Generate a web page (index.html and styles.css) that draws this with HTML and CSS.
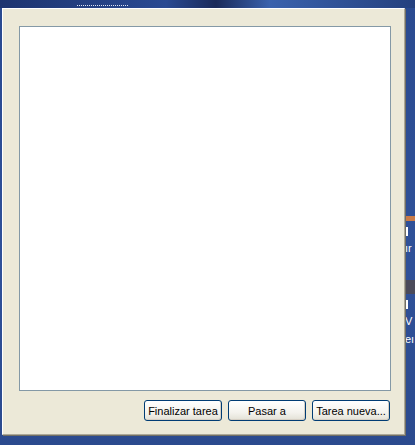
FILE: index.html
```html
<!DOCTYPE html>
<html lang="es">
<head>
  <meta charset="UTF-8">
  <title>Tareas</title>
  <link rel="stylesheet" href="styles.css">
</head>
<body>
  <div class="desktop">
    <div class="top-strip"><span class="dots"></span></div>
    <div class="side-bits">
      <span class="bit orange"></span>
      <span class="bit white"></span>
      <span class="txt">ır</span>
      <span class="bit dark"></span>
      <span class="bit white"></span>
      <span class="txt">V</span>
      <span class="txt">eı</span>
    </div>
    <div class="window">
      <div class="listbox"></div>
      <div class="buttons">
        <button class="btn">Finalizar tarea</button>
        <button class="btn">Pasar a</button>
        <button class="btn">Tarea nueva...</button>
      </div>
    </div>
  </div>
</body>
</html>
```

FILE: styles.css
```css
body {
  margin: 0;
  padding: 0;
  font-family: "Liberation Sans", Arial, sans-serif;
  background: #2d4c92;
}

.desktop {
  position: relative;
  width: 415px;
  height: 445px;
  overflow: hidden;
  background: linear-gradient(180deg, #2a4a90 0%, #2f5199 60%, #2b4a8e 100%);
}

.top-strip {
  position: absolute;
  left: 0;
  top: 0;
  width: 415px;
  height: 8px;
  background: linear-gradient(90deg, #1d3470 0%, #2a4a92 40%, #1a2a5a 52%, #3a62ad 65%, #24407e 100%);
}

.dots {
  position: absolute;
  left: 77px;
  top: 5px;
  width: 51px;
  border-top: 1px dotted #dfe6f5;
}

.side-bits {
  position: absolute;
  left: 405px;
  top: 216px;
  width: 10px;
  display: flex;
  flex-direction: column;
  gap: 6px;
  font-size: 11px;
  color: #ffffff;
  line-height: 12px;
}

.bit {
  display: block;
  height: 6px;
}

.bit.orange { background: #c87a48; height: 5px; }
.bit.white { background: #ffffff; width: 3px; height: 9px; }
.bit.dark { background: #4a4a5a; height: 14px; margin-top: 20px; }

.window {
  position: absolute;
  left: 2px;
  top: 8px;
  background: #ece9d8;
  border-top: 1px solid #ffffff;
  border-left: 1px solid #ffffff;
  border-right: 1px solid #aca899;
  border-bottom: 1px solid #aca899;
  box-shadow: 1px 1px 0 #716f64;
  padding: 17px 0 0 16px;
  box-sizing: border-box;
  width: 403px;
  height: 427px;
  display: flex;
  flex-direction: column;
}

.listbox {
  width: 372px;
  height: 365px;
  box-sizing: border-box;
  background: #ffffff;
  border: 1px solid #8499a6;
}

.buttons {
  display: flex;
  justify-content: flex-end;
  gap: 6px;
  width: 372px;
  margin-top: 9px;
  padding-right: 1px;
  box-sizing: border-box;
}

.btn {
  width: 78px;
  height: 21px;
  padding: 0;
  font-family: "Liberation Sans", Arial, sans-serif;
  font-size: 11px;
  color: #000000;
  border: 1px solid #003c74;
  border-radius: 3px;
  background: linear-gradient(180deg, #ffffff 0%, #f4f3ee 60%, #e3e1d6 100%);
  box-shadow: inset -1px -1px 0 #d6d0c5;
  cursor: pointer;
}
```
